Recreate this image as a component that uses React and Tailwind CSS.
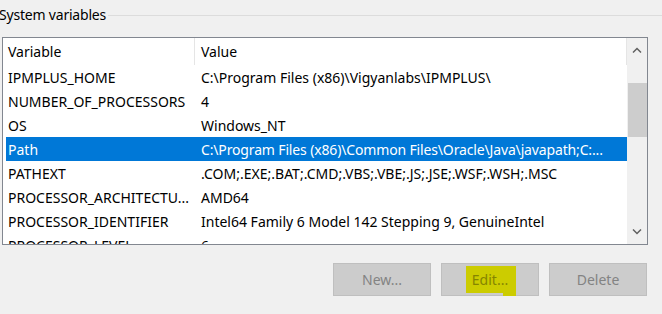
const rows = [
  ['IPMPLUS_HOME', 'C:\\Program Files (x86)\\Vigyanlabs\\IPMPLUS\\'],
  ['NUMBER_OF_PROCESSORS', '4'],
  ['OS', 'Windows_NT'],
  ['Path', 'C:\\Program Files (x86)\\Common Files\\Oracle\\Java\\javapath;C:...'],
  ['PATHEXT', '.COM;.EXE;.BAT;.CMD;.VBS;.VBE;.JS;.JSE;.WSF;.WSH;.MSC'],
  ['PROCESSOR_ARCHITECTU...', 'AMD64'],
  ['PROCESSOR_IDENTIFIER', 'Intel64 Family 6 Model 142 Stepping 9, GenuineIntel'],
  ['PROCESSOR_LEVEL', '6'],
];

function Chevron({ up }) {
  return (
    <svg width="10" height="6" viewBox="0 0 10 6" fill="none">
      <path
        d={up ? 'M1 5.5 L5 1.5 L9 5.5' : 'M1 0.5 L5 4.5 L9 0.5'}
        stroke="#606060"
        strokeWidth="1.5"
      />
    </svg>
  );
}

export default function App() {
  return (
    <div className="w-[662px] h-[314px] bg-[#f0f0f0] overflow-hidden font-['Noto_Sans',sans-serif] text-[14px] text-black">
      {/* Group title */}
      <div className="h-[30px] flex items-center">
        <span className="ml-[-1px] pr-[2px] leading-none tracking-[-0.2px]">System variables</span>
        <div className="flex-1 h-px bg-[#dcdcdc]" />
      </div>

      {/* List view */}
      <div className="mt-[7px] ml-[2px] w-[646px] h-[208px] border border-[#828790] bg-white flex">
        <div className="flex-1 pl-[3px] overflow-hidden">
          <div className="h-[27px] flex items-center">
            <div className="w-[189px] h-full flex items-center pl-[2px] border-r border-[#e5e5e5] my-px">Variable</div>
            <div className="flex-1 h-full flex items-center pl-[6px] border-r border-[#e5e5e5]">Value</div>
          </div>
          {rows.map(([name, value], i) => {
            const sel = name === 'Path';
            return (
              <div
                key={i}
                className={`h-[24px] flex items-center whitespace-nowrap ${sel ? 'bg-[#0078d7] text-white' : ''}`}
              >
                <div className="w-[189px] pl-[2px] shrink-0">{name}</div>
                <div className={`pl-[6px] ${sel ? 'tracking-[-0.15px]' : ''}`}>{value}</div>
              </div>
            );
          })}
        </div>

        {/* Scrollbar */}
        <div className="w-[20px] bg-[#f0f0f0] flex flex-col items-center">
          <div className="h-[24px] flex items-center justify-center">
            <Chevron up />
          </div>
          <div className="mt-[21px] w-[19px] h-[54px] bg-[#cdcdcd]" />
          <div className="flex-1" />
          <div className="h-[24px] flex items-center justify-center">
            <Chevron />
          </div>
        </div>
      </div>

      {/* Buttons */}
      <div className="mt-[18px] pr-[15px] flex justify-end gap-[10px]">
        <button className="w-[98px] h-[33px] bg-[#cccccc] border border-[#bfbfbf] text-[#838383]">New...</button>
        <button className="w-[98px] h-[33px] bg-[#cccccc] border border-[#bfbfbf] text-[#838383] flex items-center justify-center">
          <span className="relative bg-[#cccc00] text-[#858500] pl-[6px] pr-[8px] py-[3px] ml-[2px]">
            <span className="absolute right-0 top-[2px] bottom-[-3px] w-[13px] bg-[#cccc00]" />
            <span className="relative">Edit...</span>
          </span>
        </button>
        <button className="w-[98px] h-[33px] bg-[#cccccc] border border-[#bfbfbf] text-[#838383]">Delete</button>
      </div>
    </div>
  );
}
